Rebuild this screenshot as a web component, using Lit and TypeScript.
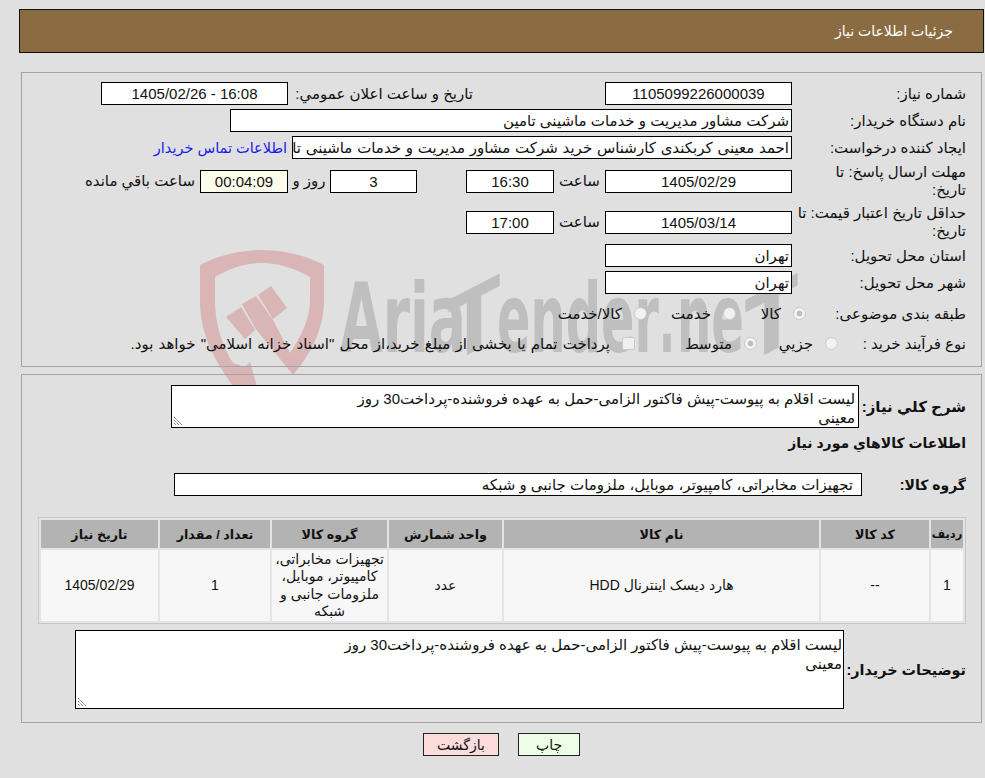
import { LitElement, html, css } from "lit";
import { customElement } from "lit/decorators.js";

const DESC = "لیست اقلام به پیوست-پیش فاکتور الزامی-حمل به عهده فروشنده-پرداخت30 روز";

@customElement("app-root")
export class AppRoot extends LitElement {
  static styles = css`
    :host { display: block; width: 985px; height: 778px; background: #e0e0e0; font-family: "Liberation Sans", "DejaVu Sans", sans-serif; font-size: 15px; color: #111; direction: rtl; overflow: hidden; position: relative; }
    .wm { position: absolute; left: 0; top: 0; pointer-events: none; }
    .wm text { font-family: "DejaVu Sans", sans-serif; font-weight: 700; fill: #bfbfbf; direction: ltr; }
    .page { position: relative; padding: 9px 1px 0 19px; display: flex; flex-direction: column; }
    .header { height: 44px; box-sizing: border-box; background: #8b6c42; border: 1px solid #111; color: #fff; display: flex; align-items: center; padding-right: 30px; font-size: 14px; margin-bottom: 19px; }
    .panel { border: 1px solid #a3a3a3; margin: 0 2px 0 2px; box-sizing: border-box; }
    .p1 { height: 295px; margin-bottom: 7px; padding-top: 9px; }
    .p2 { height: 349px; padding-top: 10px; }
    .row { display: flex; align-items: center; height: 23px; margin-bottom: 4px; }
    .lab { width: 189px; padding-right: 15px; box-sizing: border-box; line-height: 18px; flex: none; }
    .box { background: #fff; border: 1px solid #000; box-sizing: border-box; height: 23px; line-height: 21px; text-align: center; white-space: nowrap; overflow: hidden; flex: none; }
    .r { text-align: right; padding: 0 2px; }
    .wide { word-spacing: .6px; }
    .wider { word-spacing: 1px; }
    .w187 { width: 187px; }
    .w88 { width: 88px; }
    .w87 { width: 87px; }
    .w562 { width: 562px; }
    .w500 { width: 500px; }
    .yellow { background: #fdfdec; }
    .mid { width: 317px; padding-right: 132px; white-space: nowrap; }
    .hour { width: 51px; text-align: center; flex: none; }
    .gap49 { width: 49px; flex: none; }
    .days { width: 42px; text-align: center; flex: none; white-space: nowrap; }
    .remain { margin-right: 5px; white-space: nowrap; }
    .link { color: #1a1aee; margin-right: 5px; white-space: nowrap; font-size: 14.5px; }
    .tall { height: 36px; }
    .deadline { margin-bottom: 5px; }
    .cat { margin-top: 8px; margin-bottom: 7px; }
    .proc { margin-bottom: 0; }
    .lab-cat { width: 175px; white-space: nowrap; }
    .lab-proc { width: 143px; white-space: nowrap; }
    .item { display: flex; align-items: center; gap: 12px; white-space: nowrap; flex: none; }
    .i70 { width: 70px; }
    .i89 { width: 89px; }
    .i81 { width: 81px; }
    .i122 { width: 122px; }
    .radio { width: 13px; height: 13px; border-radius: 50%; background: #f2f2f2; border: 1px solid #c9c9c9; box-sizing: border-box; flex: none; }
    .radio.on { background: radial-gradient(circle, #bdbdbd 0 2.6px, #f4f4f4 3.2px); }
    .sq { width: 13px; height: 13px; background: #efefef; border: 1px solid #c9c9c9; box-sizing: border-box; flex: none; border-radius: 2px; }
    .bold { font-weight: bold; }
    .b14 { font-size: 14px; }
    .b144 { font-size: 14.4px; }
    .ta { background: #fff; border: 1px solid #000; box-sizing: border-box; text-align: right; padding: 4px 3px; line-height: 18.5px; position: relative; flex: none; overflow: hidden; }
    .grip { position: absolute; left: 1px; bottom: 1px; }
    .desc { display: flex; align-items: center; height: 43px; }
    .lab-desc { width: 122px; white-space: nowrap; }
    .ta1 { width: 688px; height: 43px; }
    .sect { padding-right: 15px; height: 30px; line-height: 30px; }
    .grp { display: flex; align-items: center; margin-top: 15px; height: 23px; }
    .lab-grp { width: 119px; white-space: nowrap; }
    .grp .box { width: 688px; padding: 0 8px 0 0; text-align: right; }
    table { border-collapse: separate; border-spacing: 2px; border: 1px solid #c8c8c8; background: #e4e4e4; margin: 21px 15px 0 16px; width: 928px; table-layout: fixed; font-size: 14px; }
    th { background: #b3b3b3; height: 28px; padding: 0; font-size: 12.7px; font-weight: bold; white-space: nowrap; }
    th.small { font-size: 11.5px; }
    td { background: #f7f7f7; height: 71px; padding: 0 3px; text-align: center; line-height: 17.4px; }
    .c1 { width: 32px; }
    .c2 { width: 108px; }
    .c3 { width: 315px; }
    .c4 { width: 113px; }
    .c5 { width: 115px; }
    .c6 { width: 110px; }
    .c7 { width: 117px; }
    .buyer { display: flex; align-items: center; margin-top: 6px; height: 79px; }
    .lab-buyer { width: 137px; white-space: nowrap; }
    .ta2 { width: 769px; height: 79px; padding: 5px 1px; }
    .btns { display: flex; justify-content: center; gap: 19px; margin-top: 10px; }
    .btn { height: 23px; border: 1px solid #222; box-sizing: border-box; display: flex; align-items: center; justify-content: center; font-size: 14px; }
    .print { width: 62px; background: #ecffe6; }
    .back { width: 76px; background: #ffdcdc; }
  `;

  grip() {
    return html`<svg class="grip" width="11" height="11" viewBox="0 0 11 11"><path d="M1 2 9 10M1 5 6 10M1 8 3 10" stroke="#6f6f6f" stroke-width="1" stroke-dasharray="1.4 .6" fill="none"/></svg>`;
  }

  render() {
    return html`
      <svg class="wm" width="985" height="778" viewBox="0 0 985 778" dir="ltr">
        <g fill="#d9b5b5">
          <path d="M200 265 C220 255 240 250 262 250 C284 250 304 255 324 265 L324 300 C324 330 310 355 293 375 L255 328 L272 318 L290 353 C302 335 310 318 310 300 L310 277 C294 268 278 263 262 263 C246 263 230 268 215 277 L215 300 C215 325 222 345 233 363 L245 367 L250 362 L258 390 L236 390 C214 360 200 335 200 300 Z"/>
          <path d="M226 317 241 307 255 330 245 339Z"/>
          <path d="M242 304 256 296 273 320 255 328Z"/>
          <path d="M258 295 271 286 287 308 273 319Z"/>
        </g>
        <text x="340" y="352" font-size="96" textLength="126" lengthAdjust="spacingAndGlyphs">Aria</text>
        <text transform="translate(448 365) skewY(-27.4)" font-size="89" textLength="52" lengthAdjust="spacingAndGlyphs">T</text>
        <text x="497" y="352" font-size="96" textLength="162" lengthAdjust="spacingAndGlyphs">ender</text>
        <text x="659" y="352" font-size="96" textLength="16" lengthAdjust="spacingAndGlyphs">.</text>
        <text x="677" y="352" font-size="96" textLength="67" lengthAdjust="spacingAndGlyphs">ne</text>
        <text transform="translate(745 365) skewY(-27.4)" font-size="89" textLength="53" lengthAdjust="spacingAndGlyphs">T</text>
      </svg>
      <div class="page">
        <div class="header">جزئیات اطلاعات نیاز</div>
        <div class="panel p1">
          <div class="row"><div class="lab">شماره نیاز:</div><div class="box w187">1105099226000039</div>
            <div class="lab mid">تاریخ و ساعت اعلان عمومي:</div><div class="box w187">16:08 - 1405/02/26</div></div>
          <div class="row"><div class="lab">نام دستگاه خریدار:</div><div class="box w562 r">شرکت مشاور مدیریت و خدمات ماشینی تامین</div></div>
          <div class="row"><div class="lab">ایجاد کننده درخواست:</div><div class="box w500 r wide">احمد معینی کربکندی کارشناس خرید شرکت مشاور مدیریت و خدمات ماشینی تامین</div><a class="link">اطلاعات تماس خریدار</a></div>
          <div class="row tall deadline"><div class="lab">مهلت ارسال پاسخ: تا<br>تاریخ:</div><div class="box w187">1405/02/29</div><span class="hour">ساعت</span><div class="box w88">16:30</div><span class="gap49"></span><div class="box w87">3</div><span class="days">روز و</span><div class="box w88 yellow">00:04:09</div><span class="remain">ساعت باقي مانده</span></div>
          <div class="row tall"><div class="lab">حداقل تاریخ اعتبار قیمت: تا تاریخ:</div><div class="box w187">1405/03/14</div><span class="hour">ساعت</span><div class="box w88">17:00</div></div>
          <div class="row"><div class="lab">استان محل تحویل:</div><div class="box w187 r">تهران</div></div>
          <div class="row"><div class="lab">شهر محل تحویل:</div><div class="box w187 r">تهران</div></div>
          <div class="row cat"><div class="lab lab-cat">طبقه بندی موضوعی:</div>
            <div class="item i70"><span class="radio on"></span><span>کالا</span></div>
            <div class="item i89"><span class="radio"></span><span>خدمت</span></div>
            <div class="item"><span class="radio"></span><span>کالا/خدمت</span></div></div>
          <div class="row proc"><div class="lab lab-proc">نوع فرآیند خرید :</div>
            <div class="item i81"><span class="radio"></span><span>جزیي</span></div>
            <div class="item i122"><span class="radio on"></span><span>متوسط</span></div>
            <div class="item"><span class="sq"></span><span class="wider">پرداخت تمام یا بخشی از مبلغ خرید،از محل "اسناد خزانه اسلامی" خواهد بود.</span></div></div>
        </div>
        <div class="panel p2">
          <div class="desc"><div class="lab lab-desc bold">شرح کلي نیاز:</div><div class="ta ta1">${DESC}<br>معینی${this.grip()}</div></div>
          <div class="sect bold b14">اطلاعات کالاهاي مورد نیاز</div>
          <div class="grp"><div class="lab lab-grp bold b14">گروه کالا:</div><div class="box">تجهیزات مخابراتی، کامپیوتر، موبایل، ملزومات جانبی و شبکه</div></div>
          <table>
            <colgroup><col class="c1"><col class="c2"><col class="c3"><col class="c4"><col class="c5"><col class="c6"><col class="c7"></colgroup>
            <tr><th class="small">ردیف</th><th>کد کالا</th><th>نام کالا</th><th>واحد شمارش</th><th>گروه کالا</th><th>تعداد / مقدار</th><th>تاریخ نیاز</th></tr>
            <tr><td>1</td><td>--</td><td>هارد دیسک اینترنال HDD</td><td>عدد</td><td>تجهیزات مخابراتی، کامپیوتر، موبایل، ملزومات جانبی و شبکه</td><td>1</td><td>1405/02/29</td></tr>
          </table>
          <div class="buyer"><div class="lab lab-buyer bold b144">توضیحات خریدار:</div><div class="ta ta2">${DESC}<br>معینی${this.grip()}</div></div>
        </div>
        <div class="btns"><div class="btn print">چاپ</div><div class="btn back">بازگشت</div></div>
      </div>`;
  }
}
